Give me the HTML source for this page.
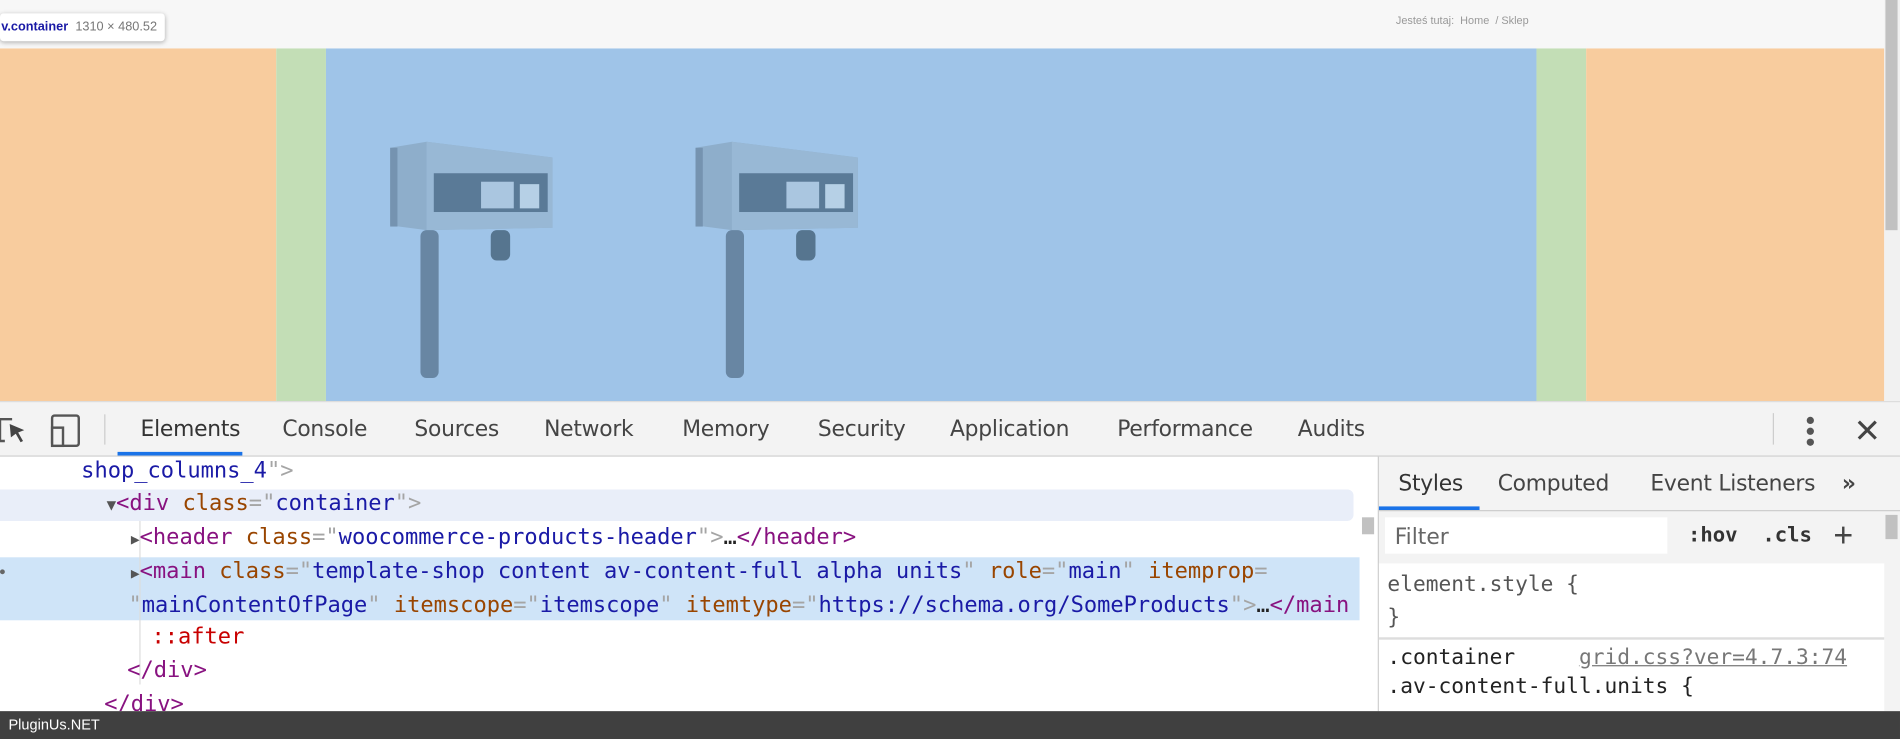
<!DOCTYPE html>
<html><head><meta charset="utf-8"><style>
*{margin:0;padding:0;box-sizing:border-box}
html,body{width:1900px;height:739px;overflow:hidden;background:#fff}
#s{position:absolute;left:0;top:0;width:1568px;height:610px;transform:scale(1.21173,1.2115);transform-origin:0 0;font-family:"Liberation Sans",sans-serif}
.a{position:absolute}
.m{font-family:"DejaVu Sans Mono","Liberation Mono",monospace;font-size:18.2px;white-space:pre;color:#222}
.tg{color:#881280}.at{color:#994500}.av{color:#1a1aa6}.br{color:#a5a5a5}
.tab{position:absolute;top:344px;font-size:18px;color:#444;font-family:"DejaVu Sans","Liberation Sans",sans-serif;letter-spacing:-0.2px}
.rt{position:absolute;top:389px;font-size:18px;color:#444;font-family:"DejaVu Sans","Liberation Sans",sans-serif;letter-spacing:-0.2px}
</style></head><body><div id="s">
<div class="a" style="left:0;top:0;width:1555px;height:40px;background:#f7f7f7"></div>
<div class="a" style="left:0;top:11px;width:136px;height:23px;background:#fff;border-radius:3px;box-shadow:0 1px 4px rgba(0,0,0,.3);font-size:10.5px;line-height:23px;padding-left:1px;font-weight:bold;color:#1a1aa6;white-space:nowrap;overflow:hidden">v.container <span style="font-weight:normal;color:#777;margin-left:3px">1310 × 480.52</span></div>
<div class="a" style="left:1152px;top:12px;font-size:9px;color:#999">Jesteś tutaj:&nbsp; Home &nbsp;/ Sklep</div>
<div class="a" style="left:0;top:40px;width:228px;height:291px;background:#f8cc9e"></div>
<div class="a" style="left:228px;top:40px;width:41px;height:291px;background:#c3deb6"></div>
<div class="a" style="left:269px;top:40px;width:999px;height:291px;background:#9fc4e8"></div>
<div class="a" style="left:1268px;top:40px;width:41px;height:291px;background:#c3deb6"></div>
<div class="a" style="left:1309px;top:40px;width:246px;height:291px;background:#f8cc9e"></div>
<div class="a" style="left:1555px;top:0;width:13px;height:331px;background:#f1f1f1"></div>
<div class="a" style="left:1556px;top:0;width:10px;height:190px;background:#c1c1c1"></div>
<svg class="a" style="left:0;top:0" width="1568" height="331">
<g id="d">
<path d="M322 122 L352 117 L456 130 L456 188 L352 190 L322 186 Z" fill="#8eaecb"/>
<path d="M352 117 L456 130 L456 188 L352 190 Z" fill="#98b8d5"/>
<rect x="358" y="143" width="94" height="32" fill="#5a7a97"/>
<rect x="397" y="150" width="27" height="22" fill="#aac6e0"/>
<rect x="429" y="152" width="16" height="20" fill="#b6d0e6"/>
<rect x="322" y="122" width="6" height="65" fill="#7593b0"/>
<rect x="347" y="190" width="15" height="122" rx="5" fill="#6886a3"/>
<rect x="405" y="190" width="16" height="25" rx="5" fill="#56758f"/>
</g>
<use href="#d" x="252"/>
</svg>
<div class="a" style="left:0;top:331px;width:1568px;height:46px;background:#f3f3f3;border-top:1px solid #ddd;border-bottom:1px solid #ccc"></div>
<svg class="a" style="left:0;top:340px" width="80" height="30"><path d="M0 6 H10 M0 6 V24 H4" stroke="#555" stroke-width="2" fill="none"/><path d="M8 10 L20 15 L15 17 L19 24 L17 25 L13 18 L9 21 Z" fill="#444"/><rect x="43" y="3" width="22" height="25" rx="2" fill="none" stroke="#555" stroke-width="2"/><rect x="43" y="13" width="9" height="15" fill="#f3f3f3" stroke="#555" stroke-width="2"/></svg>
<div class="a" style="left:86px;top:342px;width:1px;height:25px;background:#ccc"></div>
<div class="tab" style="left:116px;color:#333">Elements</div>
<div class="a" style="left:97px;top:373px;width:103px;height:3px;background:#1a73e8"></div>
<div class="tab" style="left:233px">Console</div>
<div class="tab" style="left:342px">Sources</div>
<div class="tab" style="left:449px">Network</div>
<div class="tab" style="left:563px">Memory</div>
<div class="tab" style="left:675px">Security</div>
<div class="tab" style="left:784px">Application</div>
<div class="tab" style="left:922px">Performance</div>
<div class="tab" style="left:1071px">Audits</div>
<div class="a" style="left:1463px;top:341px;width:1px;height:26px;background:#ccc"></div>
<div class="a" style="left:1491px;top:344px;width:6px;height:6px;border-radius:3px;background:#555;box-shadow:0 9px 0 #555,0 18px 0 #555"></div>
<svg class="a" style="left:1532px;top:346px" width="18" height="18"><path d="M2 2 L16 16 M16 2 L2 16" stroke="#444" stroke-width="2.6"/></svg>
<div class="a" style="left:0;top:377px;width:1137px;height:210px;background:#fff;overflow:hidden">
<div class="a" style="left:0;top:27px;width:1117px;height:26px;background:#e9eef9;border-radius:0 5px 5px 0"></div>
<div class="a" style="left:0;top:83px;width:1122px;height:52px;background:#cfe4f8"></div>
<div class="a" style="left:115px;top:53px;width:1px;height:135px;background:#ddd"></div>
<div class="a m" style="left:67px;top:1px"><span class="av">shop_columns_4</span><span class="br">"&gt;</span></div>
<div class="a m" style="left:88px;top:28px"><span style="color:#555;font-size:13px">▼</span><span class="tg">&lt;div </span><span class="at">class</span><span class="br">="</span><span class="av">container</span><span class="br">"&gt;</span></div>
<div class="a m" style="left:108px;top:56px"><span style="color:#555;font-size:12px">▶</span><span class="tg">&lt;header </span><span class="at">class</span><span class="br">="</span><span class="av">woocommerce-products-header</span><span class="br">"&gt;</span>…<span class="tg">&lt;/header&gt;</span></div>
<div class="a" style="left:0;top:93px;width:4px;height:4px;background:#666;border-radius:2px"></div>
<div class="a m" style="left:108px;top:84px"><span style="color:#555;font-size:12px">▶</span><span class="tg">&lt;main </span><span class="at">class</span><span class="br">="</span><span class="av">template-shop content av-content-full alpha units</span><span class="br">"</span> <span class="at">role</span><span class="br">="</span><span class="av">main</span><span class="br">"</span> <span class="at">itemprop</span><span class="br">=</span></div>
<div class="a m" style="left:106px;top:112px"><span class="br">"</span><span class="av">mainContentOfPage</span><span class="br">"</span> <span class="at">itemscope</span><span class="br">="</span><span class="av">itemscope</span><span class="br">"</span> <span class="at">itemtype</span><span class="br">="</span><span class="av">https://schema.org/SomeProducts</span><span class="br">"&gt;</span>…<span class="tg">&lt;/main</span></div>
<div class="a m" style="left:125px;top:138px;color:#c80000">::after</div>
<div class="a m" style="left:105px;top:166px"><span class="tg">&lt;/div&gt;</span></div>
<div class="a m" style="left:86px;top:194px"><span class="tg">&lt;/div&gt;</span></div>
</div>
<div class="a" style="left:1137px;top:377px;width:1px;height:210px;background:#ccc"></div>
<div class="a" style="left:1124px;top:427px;width:10px;height:14px;background:#c1c1c1"></div>
<div class="a" style="left:1138px;top:377px;width:430px;height:210px;background:#f3f3f3"></div>
<div class="rt" style="left:1154px;color:#333">Styles</div>
<div class="rt" style="left:1236px">Computed</div>
<div class="rt" style="left:1362px">Event Listeners</div>
<div class="rt" style="left:1520px;font-weight:bold;font-size:18px">»</div>
<div class="a" style="left:1138px;top:418px;width:83px;height:3px;background:#1a73e8"></div>
<div class="a" style="left:1138px;top:421px;width:430px;height:1px;background:#ccc"></div>
<div class="a" style="left:1143px;top:427px;width:233px;height:30px;background:#fff;font-size:18px;color:#666;padding:6px 0 0 8px;font-family:'DejaVu Sans',sans-serif">Filter</div>
<div class="a m" style="left:1393px;top:432px;font-weight:bold;color:#333;font-size:17px">:hov  .cls</div>
<div class="a" style="left:1513px;top:428px;font-size:28px;color:#444;line-height:28px">+</div>
<div class="a" style="left:1556px;top:425px;width:10px;height:20px;background:#c1c1c1"></div>
<div class="a" style="left:1138px;top:465px;width:417px;height:122px;background:#fff"></div>
<div class="a" style="left:1138px;top:526px;width:417px;height:2px;background:#ddd"></div>
<div class="a m" style="left:1145px;top:470px;color:#555;line-height:27px;font-size:17.5px">element.style {
}</div>
<div class="a m" style="left:1145px;top:531px;line-height:24px;font-size:17.5px">.container     <span style="color:#777;text-decoration:underline">grid.css?ver=4.7.3:74</span>
.av-content-full.units {</div>
<div class="a" style="left:0;top:587px;width:1568px;height:23px;background:#404040;color:#fff;font-size:12px;line-height:23px;padding-left:7px">PluginUs.NET</div>
</div></body></html>
